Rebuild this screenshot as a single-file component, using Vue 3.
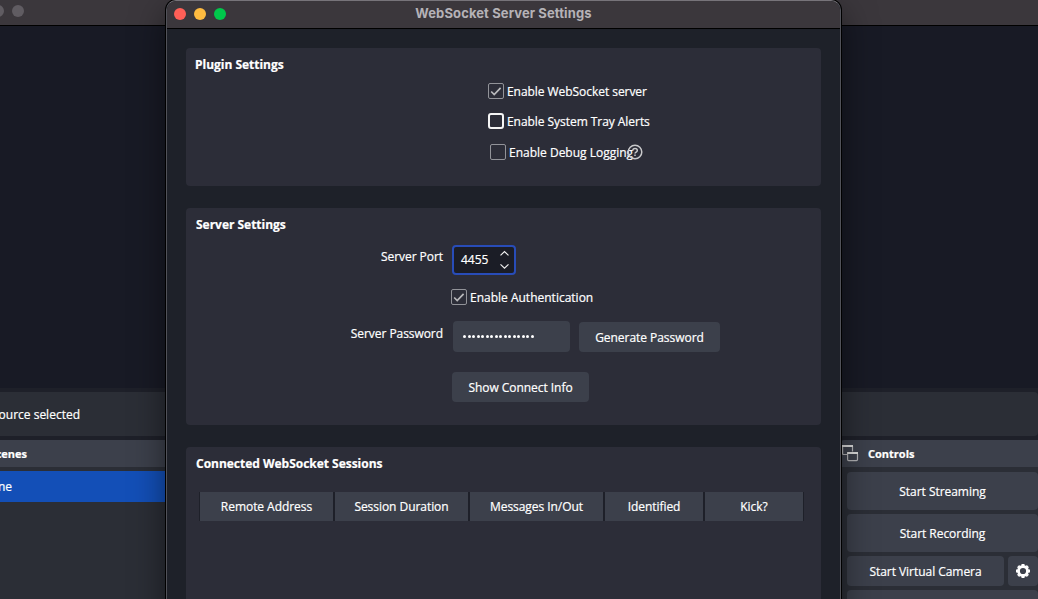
<script setup>
const plugin = [
  { label: 'Enable WebSocket server', kind: 'on' },
  { label: 'Enable System Tray Alerts', kind: 'focus' },
  { label: 'Enable Debug Logging', kind: 'off', help: true }
]
const columns = ['Remote Address', 'Session Duration', 'Messages In/Out', 'Identified', 'Kick?']
</script>

<template>
  <div class="screen">
    <div class="main">
      <div class="main-title"><i class="dim"></i><i class="dim"></i></div>
      <div class="preview"></div>
      <div class="source-bar"><span>No source selected</span></div>
      <div class="docks">
        <section class="dock scenes">
          <header>Scenes</header>
          <div class="scene"><span>Scene</span></div>
        </section>
        <section class="dock controls">
          <header>
            <svg class="popout" width="17" height="17" viewBox="0 0 17 17">
              <path d="M5 9.5H1.5A.9.9 0 0 1 .6 8.6V1.5H10.5v5" fill="none" stroke="#b3b3b6" stroke-width="1.2" />
              <path d="M0 1h11" stroke="#dcdcdc" stroke-width="2" />
              <rect x="5.6" y="8" width="9.9" height="7.6" rx="1" fill="#3c404b" stroke="#b3b3b6" stroke-width="1.2" />
              <path d="M5.1 8h10.9" stroke="#dcdcdc" stroke-width="2" />
            </svg>
            <span>Controls</span>
          </header>
          <div class="control-list">
            <button class="wide">Start Streaming</button>
            <button class="wide">Start Recording</button>
            <div class="pair">
              <button>Start Virtual Camera</button>
              <button class="gear">
                <svg width="16" height="16" viewBox="-8 -8 16 16">
                  <circle r="4.5" fill="none" stroke="#fff" stroke-width="2.8" />
                  <path d="M0-7V-5M0 5V7M-7 0H-5M5 0H7M-4.9-4.9-3.8-3.8M3.8 3.8 4.9 4.9M-4.9 4.9-3.8 3.8M3.8-3.8 4.9-4.9" stroke="#fff" stroke-width="3" />
                </svg>
              </button>
            </div>
            <button class="wide"></button>
          </div>
        </section>
      </div>
    </div>

    <div class="dialog">
      <div class="titlebar">
        <i class="light red"></i><i class="light yellow"></i><i class="light green"></i>
        <h1><span>WebSocket Server Settings</span></h1>
      </div>
      <div class="body">
        <section class="group plugin">
          <h2>Plugin Settings</h2>
          <div class="checks">
            <label v-for="p in plugin" :key="p.label" class="check" :class="p.kind">
              <i class="box">
                <svg v-if="p.kind === 'on'" width="16" height="16" viewBox="0 0 16 16"><path d="M3.2 8.5 6.2 11.5 12.6 4.8" /></svg>
              </i>
              <span>{{ p.label }}</span>
              <svg v-if="p.help" class="help" width="16" height="16" viewBox="0 0 16 16">
                <circle cx="8" cy="8" r="6.8" />
                <path d="M5.8 6.6C5.8 3.7 10.3 3.8 10.3 6.4 10.3 8 8 8 8 9.5M8 10.6V12" />
              </svg>
            </label>
          </div>
        </section>

        <section class="group server">
          <h2>Server Settings</h2>
          <div class="row port">
            <span class="name">Server Port</span>
            <div class="spin">
              <span>4455</span>
              <svg width="10" height="20" viewBox="0 0 10 20"><path d="M1.5 5.4 5.5 1.6 9.5 5.4M1.5 14.4 5.5 18.2 9.5 14.4" /></svg>
            </div>
          </div>
          <label class="check auth">
            <i class="box"><svg width="16" height="16" viewBox="0 0 16 16"><path d="M3.2 8.5 6.2 11.5 12.6 4.8" /></svg></i>
            <span>Enable Authentication</span>
          </label>
          <div class="row pass">
            <span class="name">Server Password</span>
            <div class="secret"><i v-for="n in 16" :key="n"></i></div>
            <button class="generate">Generate Password</button>
          </div>
          <button class="show">Show Connect Info</button>
        </section>

        <section class="group sessions">
          <h2>Connected WebSocket Sessions</h2>
          <div class="thead">
            <span v-for="c in columns" :key="c">{{ c }}</span>
          </div>
        </section>
      </div>
    </div>
  </div>
</template>

<style>
body { overflow: hidden; background: #1e2029; }
</style>

<style scoped>
* { box-sizing: border-box; }
.screen { position: relative; width: 1038px; height: 599px; overflow: hidden; font: 12px/18px "Open Sans", sans-serif; color: #fff; background: #1e2029; white-space: nowrap; -webkit-text-stroke: .2px; }
button { font: inherit; letter-spacing: -.04px; color: inherit; border: 0; padding: 2px 0 0; margin: 0; border-radius: 4px; background: #3c404b; white-space: nowrap; }
h1, h2 { margin: 0; }
.main { height: 599px; display: flex; flex-direction: column; }
.main-title { height: 26px; flex: none; background: #3b373c; border-bottom: 1px solid #000; display: flex; gap: 8px; padding: 5px 0 0 12px; margin-left: -20px; }
.dim { width: 12px; height: 12px; border-radius: 50%; background: #605c62; }
.preview { height: 362px; flex: none; background: #181a25; }
.source-bar { height: 44px; flex: none; margin-top: 4px; background: #2b2e36; padding-top: 14px; border-radius: 0 4px 4px 0; }
.source-bar span { display: block; width: 80px; direction: rtl; }
.docks { flex: 1; margin-top: 4px; display: flex; justify-content: space-between; }
.dock { background: #2b2e36; }
.dock header { height: 27px; background: #3c404b; font-weight: 700; font-size: 11px; line-height: 27px; }
.scenes { width: 170px; }
.scenes header { direction: rtl; padding-right: 143px; }
.scene { margin-top: 4px; height: 31px; background: #134fb7; line-height: 31px; }
.scene span { display: block; width: 12px; direction: rtl; }
.controls { width: 197px; }
.controls header { display: flex; gap: 9px; border-radius: 4px 0 0 0; }
.popout { margin: 5px 0 0 1px; }
.control-list { padding: 5px 0 0 6px; display: flex; flex-direction: column; gap: 4px; }
.wide { height: 38px; width: 191px; flex: none; }
.pair { display: flex; gap: 4px; }
.pair button { height: 30px; width: 157px; flex: none; }
.pair .gear { width: 30px; padding: 0; display: flex; align-items: center; justify-content: center; }

.dialog { position: absolute; left: 166px; top: 0; width: 675px; height: 620px; border: 1px solid #515259; border-top-color: #77747a; border-radius: 10px; background: #1e2129; box-shadow: 0 0 0 1px #000, 0 12px 34px rgba(0, 0, 0, .5); overflow: hidden; }
.titlebar { height: 28px; background: #3b373c; border-bottom: 1px solid #000; display: flex; align-items: center; gap: 8px; padding: 0 7px 1px; }
.light { width: 12px; height: 12px; border-radius: 50%; }
.red { background: #ff5f57; }
.yellow { background: #febb40; }
.green { background: #00c84b; }
h1 { flex: 1; font: 700 13px/24px Inter, sans-serif; letter-spacing: .11px; color: #b5b2b7; text-align: center; padding: 0 60px 2px 0; -webkit-text-stroke: 0; }
.body { padding: 19px; }
.group { background: #2c2d38; border-radius: 4px; padding: 8px 9px 0; }
.group + .group { margin-top: 22px; }
h2 { font-size: 12px; line-height: 18px; font-weight: 700; letter-spacing: -.02px; }
.plugin { height: 138px; }
.server { height: 217px; padding-left: 10px; }
.sessions { height: 170px; padding-left: 10px; }
.checks { padding: 9px 0 0 293px; }
.check { display: flex; height: 16px; line-height: 16px; gap: 3px; align-items: center; }
.check span { padding-top: 2px; letter-spacing: -.05px; }
.checks .check { margin-bottom: 14px; }
.checks .off { margin: 15px 0 0 2px; }
.off span { letter-spacing: 0; }
.box { width: 16px; height: 16px; flex: none; border: 1px solid #929399; border-radius: 2px; }
.box svg { display: block; margin: -1px; }
.box path { fill: none; stroke: #b9b9bc; stroke-width: 1.7; }
.focus .box { border: 2px solid #f5f5f5; border-radius: 3px; }
.help { margin-left: -9px; fill: none; stroke: #c8c8ca; stroke-width: 1.5; }
.row { display: flex; }
.name { width: 247px; text-align: right; padding-top: 3px; letter-spacing: -.06px; }
.port { margin-top: 11px; }
.pass .name { padding-top: 4px; }
.spin { margin-left: 9px; width: 64px; height: 30px; border: 2px solid #284cb8; border-radius: 4px; background: #1b1d26; display: flex; justify-content: space-between; align-items: center; padding: 0 5px 0 7px; }
.spin path { fill: none; stroke: #eee; stroke-width: 1.2; }
.auth { margin: 14px 0 0 255px; }
.check.auth span { letter-spacing: 0; }
.pass { margin-top: 16px; }
.secret { margin-left: 10px; width: 117px; height: 31px; border-radius: 4px; background: #3c404b; display: flex; align-items: center; gap: 1.5px; padding-left: 10px; }
.secret i { width: 3px; height: 3px; border-radius: 50%; background: #fff; }
.generate { margin: 1px 0 0 9px; width: 141px; height: 30px; }
.show { display: block; margin: 20px 0 0 256px; width: 137px; height: 30px; }
.thead { width: 605px; margin: 19px 0 0 3px; height: 29px; display: grid; grid-template-columns: 133px 133px 133px 98px 98px; gap: 2px; padding: 0 1px; background: #1e2029; line-height: 29px; text-align: center; }
.thead span { background: #3c404b; letter-spacing: -.05px; }
</style>
